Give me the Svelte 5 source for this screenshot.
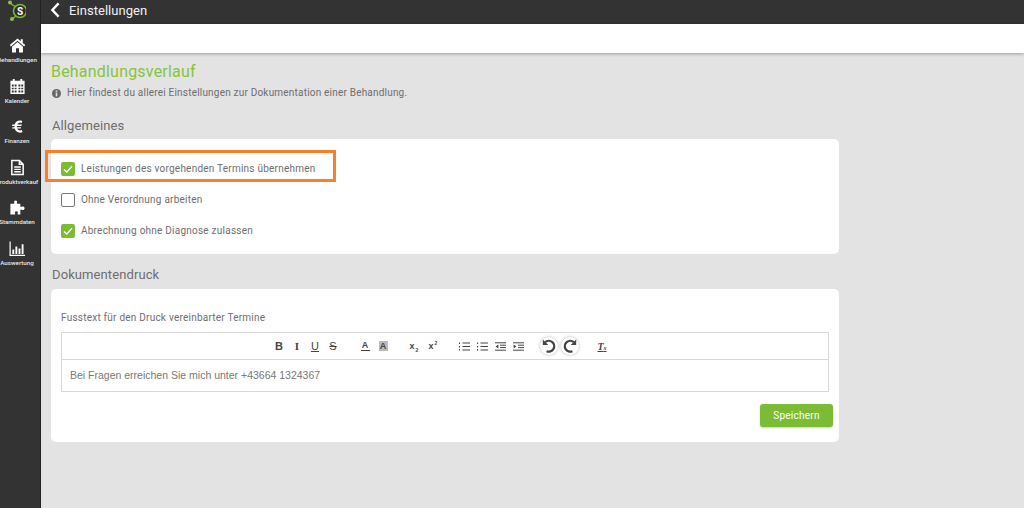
<script>
	const navItems = [
		{ label: 'Behandlungen', icon: 'home' },
		{ label: 'Kalender', icon: 'calendar' },
		{ label: 'Finanzen', icon: 'euro' },
		{ label: 'Produktverkauf', icon: 'file' },
		{ label: 'Stammdaten', icon: 'puzzle' },
		{ label: 'Auswertung', icon: 'chart' }
	];

	const options = [
		{ label: 'Leistungen des vorgehenden Termins übernehmen', checked: true },
		{ label: 'Ohne Verordnung arbeiten', checked: false },
		{ label: 'Abrechnung ohne Diagnose zulassen', checked: true }
	];
</script>

<div class="shell">
	<aside class="sidebar">
		<div class="logo">
			<svg width="26" height="24" viewBox="0 0 26 24" fill="none">
				<path d="M10 3 L17 8 M12 19 L16 16" stroke="#7cb82f" stroke-width="1.4" />
				<circle cx="10" cy="2.5" r="2" fill="#8fc045" />
				<circle cx="12" cy="19" r="2" fill="#8fc045" />
				<circle cx="20" cy="11" r="6.5" fill="#2b2b2b" stroke="#7cb82f" stroke-width="1.5" />
				<text x="20" y="14.5" text-anchor="middle" class="logo-s">S</text>
			</svg>
		</div>
		<nav class="nav">
			{#each navItems as item}
				<div class="nav-item">
					<svg class="nav-icon" width="17" height="17" viewBox="0 0 18 18" fill="#fff">
						{#if item.icon === 'home'}
							<path d="M9 1.6 L0.8 8.6 L2 10 L9 4.1 L16 10 L17.2 8.6 L14.6 6.4 V2.4 H12.4 V4.5 Z" />
							<path d="M3.2 10.2 L9 5.4 L14.8 10.2 V16.4 H10.6 V12 H7.4 V16.4 H3.2 Z" />
						{:else if item.icon === 'calendar'}
							<path fill-rule="evenodd" d="M1.5 3 H4 V1 H6 V3 H12 V1 H14 V3 H16.5 V17 H1.5 Z M3 7 V9 H5 V7 Z M6 7 V9 H8 V7 Z M10 7 V9 H12 V7 Z M13 7 V9 H15 V7 Z M3 10.2 V12 H5 V10.2 Z M6 10.2 V12 H8 V10.2 Z M10 10.2 V12 H12 V10.2 Z M13 10.2 V12 H15 V10.2 Z M3 13.2 V15.4 H5 V13.2 Z M6 13.2 V15.4 H8 V13.2 Z M10 13.2 V15.4 H12 V13.2 Z M13 13.2 V15.4 H15 V13.2 Z" />
						{:else if item.icon === 'euro'}
							<path d="M14 3.2 C10.5 1.8 7 3.4 6 7 H3.6 L3.2 8.4 H5.8 V9.8 H3.6 L3.2 11.2 H6 C7 14.8 10.6 16.4 14.2 15 L13.7 12.8 C11.4 13.7 9.4 13 8.6 11.2 H12.4 L12.8 9.8 H8.3 V8.4 H13.2 L13.6 7 H8.7 C9.5 5.2 11.4 4.6 13.4 5.4 Z" />
						{:else if item.icon === 'file'}
							<path fill="none" stroke="#fff" stroke-width="1.6" d="M3 1.5 H11 L15 5.5 V16.5 H3 Z M11 1.5 V5.5 H15" />
							<path stroke="#fff" stroke-width="1.4" d="M5.5 8.5 H12.5 M5.5 11 H12.5 M5.5 13.5 H12.5" />
						{:else if item.icon === 'puzzle'}
							<path d="M7 1.5 C5.6 1.5 5 2.6 5.6 3.8 C5.9 4.4 5.7 5 5 5 H1.5 V16.5 H5.5 C6.5 16.5 6.8 15.8 6.4 15 C5.8 13.8 6.6 13 7.8 13 C9 13 9.8 13.8 9.2 15 C8.8 15.8 9.1 16.5 10 16.5 H12 V12 C12 11.2 12.8 11 13.4 11.4 C14.6 12.2 16.5 11.6 16.5 9.8 C16.5 8 14.6 7.4 13.4 8.2 C12.8 8.6 12 8.4 12 7.6 V5 H9 C8.3 5 8.1 4.4 8.4 3.8 C9 2.6 8.4 1.5 7 1.5 Z" />
						{:else}
							<path fill="none" stroke="#fff" stroke-width="1.3" d="M1.2 1.5 V16.2 H17" />
							<path d="M3.5 10 H5.5 V14.8 H3.5 Z M6.8 7 H8.8 V14.8 H6.8 Z M10.1 9 H12.1 V14.8 H10.1 Z M13.4 4.5 H15.4 V14.8 H13.4 Z" />
						{/if}
					</svg>
					<span class="nav-label">{item.label}</span>
				</div>
			{/each}
		</nav>
	</aside>

	<div class="main">
		<header class="topbar">
			<svg width="10" height="16" viewBox="0 0 10 16" fill="none">
				<path d="M8.6 1.4 L2.4 8 L8.6 14.6" stroke="#fff" stroke-width="2.4" />
			</svg>
			<span class="topbar-title">Einstellungen</span>
		</header>
		<div class="subbar"></div>

		<main class="content">
			<h1 class="page-title">Behandlungsverlauf</h1>
			<p class="hint">
				<svg width="9" height="9" viewBox="0 0 10 10">
					<circle cx="5" cy="5" r="5" fill="#666" />
					<rect x="4.1" y="1.6" width="1.8" height="1.6" fill="#e3e3e3" />
					<rect x="4.1" y="4" width="1.8" height="4.2" fill="#e3e3e3" />
				</svg>
				Hier findest du allerei Einstellungen zur Dokumentation einer Behandlung.
			</p>

			<h2 class="section-title first">Allgemeines</h2>
			<section class="card options">
				{#each options as option}
					<div class="option">
						<span class="checkbox" class:checked={option.checked}>
							{#if option.checked}
								<svg width="14" height="14" viewBox="0 0 14 14" fill="none">
									<path d="M3 7.4 L5.8 10 L11 4.2" stroke="#fff" stroke-width="1.3" />
								</svg>
							{/if}
						</span>
						<span>{option.label}</span>
					</div>
				{/each}
				<div class="highlight"></div>
			</section>

			<h2 class="section-title">Dokumentendruck</h2>
			<section class="card doc">
				<div class="editor-label">Fusstext für den Druck vereinbarter Termine</div>
				<div class="editor">
					<div class="toolbar">
						<div class="tool-group format">
							<b class="tool">B</b>
							<i class="tool serif">I</i>
							<u class="tool">U</u>
							<s class="tool">S</s>
						</div>
						<div class="tool-group colors">
							<span class="tool underlined">A</span>
							<span class="tool shaded">A</span>
						</div>
						<div class="tool-group scripts">
							<span class="tool small"><span>x<sub>2</sub></span></span>
							<span class="tool small"><span>x<sup>2</sup></span></span>
						</div>
						<div class="tool-group lists">
							{#each ['ol', 'ul', 'out', 'in'] as kind}
								<svg width="11" height="9" viewBox="0 0 11 9" stroke="#444" stroke-width="1">
									{#if kind === 'ol' || kind === 'ul'}
										<path d="M3.5 1 H11 M3.5 4.5 H11 M3.5 8 H11" />
										<path d="M0.5 0.5 V2 M0.5 4 V5.5 M0.5 7 V8.5" stroke-width={kind === 'ol' ? 1 : 1.2} />
									{:else}
										<path d="M0 .8 H11 M5 3.2 H11 M5 5.6 H11 M0 8.2 H11" />
										<path d={kind === 'out' ? 'M3.4 2.4 L0.6 4.4 L3.4 6.4 Z' : 'M0.6 2.4 L3.4 4.4 L0.6 6.4 Z'} fill="#444" stroke="none" />
									{/if}
								</svg>
							{/each}
						</div>
						<div class="tool-group history">
							<span class="round">
								<svg width="16" height="16" viewBox="0 0 16 16" fill="none">
									<path d="M4.2 4.2 A5.4 5.4 0 1 1 5.6 13.2" stroke="#444" stroke-width="2.3" />
									<path d="M1.8 1.6 V7 H7.2 Z" fill="#444" />
								</svg>
							</span>
							<span class="round">
								<svg width="16" height="16" viewBox="0 0 16 16" fill="none">
									<path d="M11.8 4.2 A5.4 5.4 0 1 0 10.4 13.2" stroke="#444" stroke-width="2.3" />
									<path d="M14.2 1.6 V7 H8.8 Z" fill="#444" />
								</svg>
							</span>
						</div>
						<span class="tool serif clear-t"><span>T<small>x</small></span></span>
					</div>
					<div class="editor-body">Bei Fragen erreichen Sie mich unter +43664 1324367</div>
				</div>
				<div class="actions">
					<button class="save">Speichern</button>
				</div>
			</section>
		</main>
	</div>
</div>

<style>
	:global(body) {
		margin: 0;
		background: #e3e3e3;
	}

	.shell {
		display: flex;
		height: 508px;
		overflow: hidden;
		font-family: Roboto, sans-serif;
		color: #6e6e6e;
	}

	.sidebar {
		width: 41px;
		flex-shrink: 0;
		background: #333;
		border-right: 1px solid #222;
		overflow: hidden;
		box-sizing: border-box;
	}

	.logo {
		height: 24px;
	}

	.logo-s {
		font: 700 10px Roboto, sans-serif;
		fill: #fff;
	}

	.nav {
		display: flex;
		flex-direction: column;
		padding-top: 13px;
	}

	.nav-item {
		width: 34px;
		height: 40.6px;
		display: flex;
		flex-direction: column;
		align-items: center;
	}

	.nav-icon {
		display: block;
		flex-shrink: 0;
	}

	.nav-label {
		margin-top: 2px;
		font-size: 6.2px;
		line-height: 8px;
		font-weight: 500;
		color: #e8e8e8;
		white-space: nowrap;
	}

	.main {
		flex: 1;
		min-width: 0;
	}

	.topbar {
		height: 24px;
		box-sizing: border-box;
		padding: 0 0 4px 9px;
		background: #333;
		display: flex;
		align-items: center;
		gap: 9px;
	}

	.topbar-title {
		color: #f2f2f2;
		font-size: 13px;
		letter-spacing: 0.05px;
	}

	.subbar {
		height: 29px;
		background: #fff;
		box-shadow: 0 1px 3px rgba(0, 0, 0, 0.3);
	}

	.content {
		padding: 9px 0 0 10px;
		width: 788px;
	}

	.page-title {
		margin: 0;
		font-size: 16px;
		line-height: 19px;
		font-weight: 400;
		letter-spacing: 0.2px;
		color: #86c440;
	}

	.hint {
		margin: 4px 0 0;
		padding-left: 1px;
		font-size: 10px;
		line-height: 16px;
		letter-spacing: 0.2px;
		display: flex;
		align-items: center;
		gap: 6px;
	}

	.section-title {
		margin: 0;
		padding: 13px 0 0 1px;
		font-size: 13px;
		line-height: 16px;
		font-weight: 400;
		letter-spacing: 0.1px;
		color: #6e6e6e;
		height: 22px;
	}

	.section-title.first {
		padding-top: 17px;
		height: 21px;
	}

	.card {
		position: relative;
		background: #fff;
		border-radius: 5px;
	}

	.options {
		height: 115px;
		padding-top: 14px;
		box-sizing: border-box;
	}

	.option {
		height: 31px;
		display: flex;
		align-items: center;
		gap: 6px;
		padding-left: 10px;
		font-size: 10px;
		letter-spacing: 0.23px;
	}

	.checkbox {
		width: 14px;
		height: 14px;
		box-sizing: border-box;
		border: 1.5px solid #777;
		border-radius: 2px;
	}

	.checkbox.checked {
		border: 0;
		background: #7cbc35;
	}

	.checkbox svg {
		display: block;
	}

	.highlight {
		position: absolute;
		left: -6px;
		top: 11px;
		width: 291px;
		height: 32px;
		border: 3px solid #fa7f28;
		box-sizing: border-box;
	}

	.doc {
		height: 153px;
		padding: 23px 10px 0;
		box-sizing: border-box;
	}

	.editor-label {
		font-size: 10px;
		line-height: 12px;
		letter-spacing: 0.23px;
		margin-bottom: 8px;
	}

	.editor {
		border: 1px solid #d8d8d8;
	}

	.toolbar {
		height: 26px;
		padding-left: 212.5px;
		border-bottom: 1px solid #d8d8d8;
		display: flex;
		align-items: center;
		color: #444;
	}

	.tool-group {
		display: flex;
		align-items: center;
		flex-shrink: 0;
	}

	.tool {
		width: 9px;
		display: flex;
		justify-content: center;
		font: 700 11px "Liberation Sans", sans-serif;
		color: #444;
		white-space: nowrap;
		flex-shrink: 0;
	}

	.small {
		font-size: 9px;
	}

	.tool sub,
	.tool sup {
		font-size: 5px;
		line-height: 0;
		margin-left: 1px;
	}

	.serif {
		font-family: "Liberation Serif", serif;
	}

	.format {
		gap: 9px;
		margin-right: 23px;
	}

	.format u,
	.format s {
		font-weight: 500;
	}

	.underlined {
		border-bottom: 1px solid #444;
		line-height: 9px;
		font-size: 9px;
	}

	.shaded {
		background: #bbb;
		line-height: 10px;
		font-size: 9px;
	}

	.colors {
		gap: 9px;
		margin-right: 22px;
	}

	.scripts {
		gap: 10px;
		margin-right: 21px;
	}

	.lists {
		gap: 7px;
		margin-right: 16.5px;
	}

	.history {
		gap: 3px;
		margin-right: 18.5px;
	}

	.round {
		width: 18px;
		height: 18px;
		border-radius: 50%;
		background: #fff;
		box-shadow: 0 0 3px rgba(0, 0, 0, 0.3);
		display: flex;
		align-items: center;
		justify-content: center;
	}

	.clear-t {
		font-style: italic;
		text-decoration: underline;
		font-size: 10px;
	}

	.clear-t small {
		font-size: 6px;
	}

	.editor-body {
		height: 31px;
		box-sizing: border-box;
		padding: 0 0 2px 8px;
		display: flex;
		align-items: center;
		font: 10.5px "Liberation Sans", sans-serif;
		color: #777;
	}

	.actions {
		display: flex;
		justify-content: flex-end;
		margin-top: 12px;
	}

	.save {
		width: 73px;
		height: 23px;
		margin-right: -4px;
		border: 0;
		border-radius: 3px;
		background: #7cbc35;
		color: #fff;
		font: 400 10px Roboto, sans-serif;
		letter-spacing: 0.25px;
		box-shadow: 0 1px 2px rgba(0, 0, 0, 0.2);
	}
</style>
